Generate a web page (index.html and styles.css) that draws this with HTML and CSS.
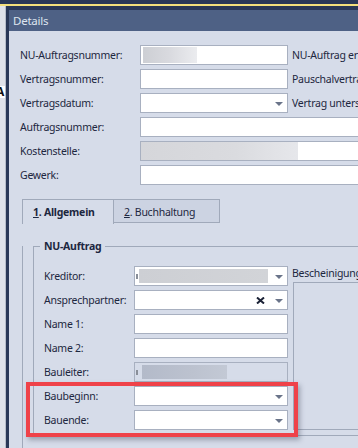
FILE: index.html
```html
<!DOCTYPE html>
<html lang="de">
<head>
    <meta charset="UTF-8">
    <meta name="viewport" content="width=device-width, initial-scale=1.0">
    <title>Details</title>
    <link rel="stylesheet" href="styles.css">
</head>
<body>
    <div class="topbar"></div>
    <div class="desk">
        <div class="app-edge">
            <div class="app-tab">A</div>
        </div>
        <div class="window">
            <div class="titlebar">Details</div>
            <div class="content">
                <div class="form">
                    <label>NU-Auftragsnummer:</label>
                    <div class="input"><span class="blur blur-nr"></span></div>
                    <span class="side-label">NU-Auftrag erteilt am:</span>

                    <label>Vertragsnummer:</label>
                    <div class="input"></div>
                    <span class="side-label">Pauschalvertrag</span>

                    <label>Vertragsdatum:</label>
                    <div class="input combo"><span class="arrow"></span></div>
                    <span class="side-label">Vertrag unterschrieben</span>

                    <label>Auftragsnummer:</label>
                    <div class="input wide"></div>

                    <label>Kostenstelle:</label>
                    <div class="input wide"><span class="blur blur-kst"></span></div>

                    <label>Gewerk:</label>
                    <div class="input wide"></div>
                </div>

                <div class="tabs">
                    <div class="tab active"><u>1</u>. Allgemein</div>
                    <div class="tab"><u>2</u>. Buchhaltung</div>
                </div>
                <div class="tab-panel">
                    <div class="group">
                        <div class="group-title">NU-Auftrag</div>
                        <div class="group-body">
                            <div class="fields">
                                <div class="row">
                                    <label>Kreditor:</label>
                                    <div class="input combo"><span class="tick"></span><span class="blur blur-kred"></span><span class="arrow"></span></div>
                                </div>
                                <div class="row">
                                    <label>Ansprechpartner:</label>
                                    <div class="input combo">
                                        <svg class="clear" width="9" height="7" viewBox="0 0 9 7"><path d="M1 0.5 L8 6.5 M8 0.5 L1 6.5" stroke="#1b2236" stroke-width="2"/></svg>
                                        <span class="arrow"></span>
                                    </div>
                                </div>
                                <div class="row">
                                    <label>Name 1:</label>
                                    <div class="input"></div>
                                </div>
                                <div class="row">
                                    <label>Name 2:</label>
                                    <div class="input"></div>
                                </div>
                                <div class="row">
                                    <label>Bauleiter:</label>
                                    <div class="input readonly"><span class="tick"></span><span class="blur blur-bl"></span></div>
                                </div>
                                <div class="highlight">
                                    <div class="row">
                                        <label>Baubeginn:</label>
                                        <div class="input combo"><span class="arrow"></span></div>
                                    </div>
                                    <div class="row">
                                        <label>Bauende:</label>
                                        <div class="input combo"><span class="arrow"></span></div>
                                    </div>
                                </div>
                            </div>
                            <div class="side">
                                <div class="side-title">Bescheinigung</div>
                                <div class="side-box"></div>
                            </div>
                        </div>
                    </div>
                </div>
            </div>
        </div>
    </div>
</body>
</html>
```

FILE: styles.css
```css
body {
    margin: 0;
    height: 448px;
    overflow: hidden;
    background-color: #dfe2e9;
    font-family: 'Segoe UI', 'Noto Sans', sans-serif;
    font-size: 10.5px;
    letter-spacing: -0.25px;
    color: #1d2740;
}

.topbar {
    height: 4px;
    background-color: #2a3857;
    border-bottom: 2px solid #f4e07c;
}

.desk {
    display: flex;
    height: 442px;
}

.app-edge {
    width: 5px;
    flex-shrink: 0;
    border-right: 1px solid #b7bdc9;
    background-color: #dfe2e9;
    padding-top: 80px;
    overflow: hidden;
}

.app-tab {
    height: 12px;
    background: #fff;
    font-weight: bold;
    font-size: 12px;
    line-height: 12px;
    text-indent: -4px;
    color: #111;
}

.window {
    width: 620px;
    flex-shrink: 0;
    border-left: 3px solid #2a3857;
    border-top: 4px solid #2a3857;
    background-color: #d6dce9;
}

.titlebar {
    height: 21px;
    line-height: 21px;
    padding-left: 4px;
    background-color: #4e6185;
    color: #dfe5f0;
    font-size: 11.5px;
}

.content {
    padding: 14px 0 0 11px;
}

.form {
    display: grid;
    grid-template-columns: 120px 148px 300px;
    grid-auto-rows: 20px;
    row-gap: 4px;
    align-items: center;
}

.input {
    box-sizing: border-box;
    height: 20px;
    border: 1px solid #a8b0c0;
    background-color: #fff;
    display: flex;
    align-items: center;
}

.input.wide {
    grid-column: 2 / 4;
}

.input.readonly {
    background-color: #d6dce9;
}

.combo {
    justify-content: flex-end;
}

.arrow {
    width: 0;
    height: 0;
    border-left: 4px solid transparent;
    border-right: 4px solid transparent;
    border-top: 4px solid #6a7489;
    margin-right: 4px;
    margin-top: 1px;
}

.clear {
    margin-right: 10px;
}

.side-label {
    padding-left: 4px;
    white-space: nowrap;
}

.blur {
    display: block;
    align-self: stretch;
}

.blur-nr {
    width: 54px;
    margin: 1px 0 1px 2px;
    background: linear-gradient(to right, #cdcfd4, #d9dadf 50%, #ebecef);
}

.blur-kst {
    width: 157px;
    background: linear-gradient(to right, #d5d6da, #dadbdf 60%, #e6e7eb);
}

.blur-kred {
    width: 129px;
    margin: 2px auto 2px 0;
    background: linear-gradient(to right, #cdcfd4, #d2d4d8);
}

.blur-bl {
    width: 85px;
    margin: 2px 0 2px 3px;
    background: linear-gradient(to right, #b3bac9, #bcc2cf 60%, #c3c9d5);
}

.tick {
    width: 2px;
    height: 5px;
    margin: 0 1px;
    background-color: #8a8f99;
}

.tabs {
    display: flex;
    margin: 14px 0 0 2px;
}

.tab {
    box-sizing: border-box;
    height: 25px;
    line-height: 24px;
    border: 1px solid #a0a9ba;
    border-bottom: none;
    background-color: #ccd3e2;
    padding: 0 10px;
}

.tab + .tab {
    width: 106px;
    border-left: none;
    height: 24px;
    border-bottom: 1px solid #a0a9ba;
}

.tab.active {
    width: 92px;
    background-color: #d6dce9;
    font-weight: bold;
}

.tab-panel {
    margin-left: 2px;
    margin-top: -1px;
    height: 219px;
    box-sizing: border-box;
    border: 1px solid #a0a9ba;
    border-top: none;
    padding: 0 0 0 10px;
    position: relative;
}

.tab-panel::before {
    content: '';
    position: absolute;
    left: 91px;
    right: 0;
    top: 0;
    border-top: 1px solid #a0a9ba;
}

.group {
    margin-top: 23px;
    border: 1px solid #a0a9ba;
    border-right: none;
    height: 190px;
    box-sizing: border-box;
}

.group-title {
    width: fit-content;
    height: 16px;
    margin: -9px 0 0 6px;
    padding: 0 4px;
    line-height: 16px;
    background-color: #d6dce9;
    font-weight: bold;
}

.group-body {
    display: flex;
    margin-top: 12px;
    height: 164px;
}

.fields {
    padding-left: 10px;
    display: flex;
    flex-direction: column;
    gap: 4px;
}

.row {
    display: grid;
    grid-template-columns: 90px 154px;
    height: 20px;
    align-items: center;
}

.highlight {
    position: relative;
    display: flex;
    flex-direction: column;
    gap: 4px;
}

.highlight::after {
    content: '';
    position: absolute;
    top: -4px;
    bottom: -7px;
    left: -18px;
    right: -10px;
    border: 4px solid #ef4249;
    box-shadow: 2px 3px 5px rgba(40, 50, 70, 0.35);
}

.side {
    margin-left: 4px;
    display: flex;
    flex-direction: column;
    flex: 1;
}

.side-title {
    height: 16px;
    line-height: 14px;
    white-space: nowrap;
}

.side-box {
    flex: 1;
    margin-left: 1px;
    border: 1px solid #a0a9ba;
    border-right: none;
}
```
